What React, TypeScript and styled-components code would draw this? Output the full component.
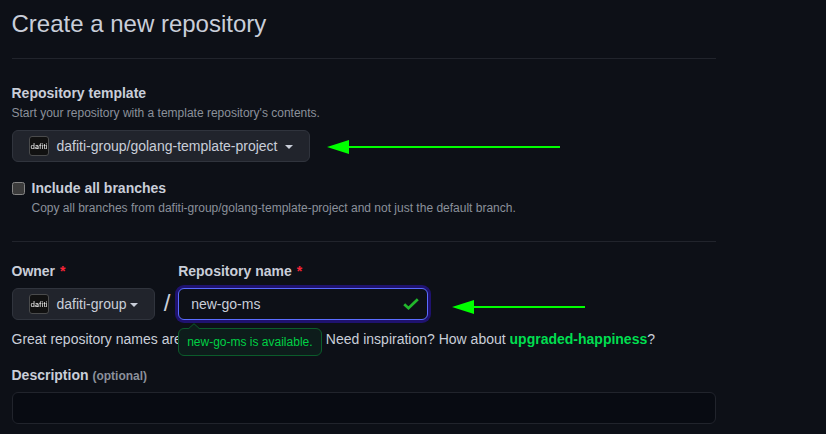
import React from "react";
import styled, { createGlobalStyle } from "styled-components";

const GlobalStyle = createGlobalStyle`
  *, *::before, *::after { box-sizing: border-box; }
  body {
    margin: 0;
    background: #0d1017;
    color: #c9ced9;
    font: 14px/21px "Liberation Sans", Arial, sans-serif;
  }
`;

const Page = styled.main`
  position: relative;
  height: 434px;
  padding: 6px 0 0 11.5px;
  overflow: hidden;
`;

const Form = styled.form`
  width: 704.33px;
`;

const Title = styled.h1`
  margin: 0;
  height: 52px;
  font-size: 24px;
  font-weight: 400;
  line-height: 36px;
`;

const Divider = styled.hr`
  margin: 0;
  height: 1px;
  border: 0;
  background: #21242c;
`;

const TemplateSection = styled.section`
  display: flex;
  flex-direction: column;
  align-items: flex-start;
  height: 182px;
  padding-top: 24px;
`;

const Label = styled.label`
  display: block;
  font-weight: 600;
`;

const Required = styled.span`
  margin-left: 5px;
  color: #f82538;
`;

const Optional = styled.span`
  font-size: 12px;
  color: #8b909b;
`;

const Note = styled.p`
  margin: 0;
  font-size: 12px;
  line-height: 18px;
  color: #8b909b;
`;

const SelectButton = styled.button<{ $gap: number; $top?: number }>`
  display: flex;
  align-items: center;
  height: 32px;
  margin: ${(p) => p.$top ?? 0}px 0 0;
  padding: 0 16px;
  border: 1px solid #30343d;
  border-radius: 6px;
  background: #21242c;
  color: #c9ced9;
  font: inherit;
  white-space: nowrap;

  &::after {
    content: "";
    margin-left: ${(p) => p.$gap}px;
    margin-top: 1px;
    border: 4px solid transparent;
    border-top-color: currentColor;
    border-bottom: 0;
  }
`;

const AvatarSvg = styled.svg`
  flex: none;
  width: 20px;
  height: 20px;
  margin-right: 8px;
  will-change: transform;
`;

const CheckRow = styled.div`
  display: flex;
  align-items: flex-start;
  gap: 7px;
  margin-top: 16px;
`;

const Checkbox = styled.input`
  appearance: none;
  flex: none;
  width: 13px;
  height: 13px;
  margin: 4px 0 0;
  border: 1px solid #858585;
  border-radius: 2.5px;
  background: #3b3b3b;
`;

const NameSection = styled.section`
  padding-top: 19px;
`;

const NameRow = styled.div`
  display: flex;
  align-items: flex-end;
  height: 59px;
`;

const Field = styled.div`
  display: flex;
  flex-direction: column;
  align-items: flex-start;
  height: 59px;
`;

const Control = styled.div`
  position: relative;
  margin-top: 6px;
`;

const Slash = styled.span`
  width: 23.33px;
  padding-left: 8.8px;
  font-size: 24px;
  line-height: 35px;
`;

const NameInput = styled.input`
  display: block;
  width: 250px;
  height: 32px;
  padding: 5px 12px;
  border: 1px solid #5a6cff;
  border-radius: 6px;
  outline: 0;
  background: #0d1017;
  box-shadow: 0 0 0 3px #1f126f;
  color: #c9ced9;
  font: inherit;
`;

const CheckIcon = styled.svg`
  position: absolute;
  right: 9px;
  top: 8px;
  width: 16px;
  height: 16px;
`;

const Availability = styled.div`
  position: absolute;
  z-index: 1;
  top: 40px;
  left: 0;
  width: 144px;
  height: 28px;
  padding: 0 8px;
  border: 1px solid #0b5c2b;
  border-radius: 6px;
  background: #0d1c1b;
  color: #00d045;
  font-size: 12px;
  line-height: 27px;
  white-space: nowrap;
`;

const Pointer = styled.svg`
  position: absolute;
  left: 9px;
  top: -6px;
  width: 12px;
  height: 7px;
`;

const Hint = styled.p`
  margin: 9px 0 15px;
  white-space: nowrap;
`;

const Suggestion = styled.strong`
  color: #00df50;
`;

const DescriptionInput = styled.input`
  display: block;
  width: 100%;
  height: 32px;
  margin-top: 5px;
  padding: 5px 12px;
  border: 1px solid #21242c;
  border-radius: 6px;
  background: #080b12;
  color: #c9ced9;
  font: inherit;
`;

const ArrowSvg = styled.svg<{ $x: number; $y: number }>`
  position: absolute;
  left: ${(p) => p.$x}px;
  top: ${(p) => p.$y}px;
`;

function Avatar() {
  return (
    <AvatarSvg viewBox="0 0 20 20">
      <rect x="0.5" y="0.5" width="19" height="19" rx="2.5" fill="#111111" stroke="#4a4b4c" />
      <text
        x="10"
        y="12.6"
        textAnchor="middle"
        textLength="17"
        lengthAdjust="spacingAndGlyphs"
        fill="#ffffff"
        fontSize="7"
        fontFamily="Inter"
      >
        dafiti
      </text>
    </AvatarSvg>
  );
}

function Arrow({ x, y, length }: { x: number; y: number; length: number }) {
  return (
    <ArrowSvg $x={x} $y={y} width={length} height={14}>
      <path d={`M0 7 22 0V6H${length}V8H22V14Z`} fill="#00ff00" />
    </ArrowSvg>
  );
}

export default function App() {
  return (
    <Page>
      <GlobalStyle />
      <Form>
        <Title>Create a new repository</Title>
        <Divider />
        <TemplateSection>
          <Label>Repository template</Label>
          <Note>Start your repository with a template repository's contents.</Note>
          <SelectButton type="button" $gap={7} $top={8}>
            <Avatar />
            dafiti-group/golang-template-project
          </SelectButton>
          <CheckRow>
            <Checkbox type="checkbox" id="branches" />
            <div>
              <Label htmlFor="branches">Include all branches</Label>
              <Note>
                Copy all branches from dafiti-group/golang-template-project and not just the
                default branch.
              </Note>
            </div>
          </CheckRow>
        </TemplateSection>
        <Divider />
        <NameSection>
          <NameRow>
            <Field>
              <Label>
                Owner<Required>*</Required>
              </Label>
              <SelectButton type="button" $gap={3.3} $top={6}>
                <Avatar />
                dafiti-group
              </SelectButton>
            </Field>
            <Slash>/</Slash>
            <Field>
              <Label htmlFor="name">
                Repository name<Required>*</Required>
              </Label>
              <Control>
                <NameInput id="name" defaultValue="new-go-ms" />
                <CheckIcon viewBox="0 0 16 16">
                  <path d="M1.2 8.2 5.5 12.2 14.8 3.3" fill="none" stroke="#22b82c" strokeWidth="2.8" />
                </CheckIcon>
                <Availability>
                  <Pointer viewBox="0 0 12 7">
                    <path d="M0.5 6 6 0.7 11.5 6V7H0.5Z" fill="#0d1c1b" />
                    <path d="M0.5 5.7 6 0.7 11.5 5.7" fill="none" stroke="#0b5c2b" />
                  </Pointer>
                  new-go-ms is available.
                </Availability>
              </Control>
            </Field>
          </NameRow>
          <Hint>
            Great repository names are short and memorable. Need inspiration? How about{" "}
            <Suggestion>upgraded-happiness</Suggestion>?
          </Hint>
          <Label htmlFor="description">
            Description <Optional>(optional)</Optional>
          </Label>
          <DescriptionInput id="description" />
        </NameSection>
      </Form>
      <Arrow x={327} y={140} length={233} />
      <Arrow x={452} y={300} length={133} />
    </Page>
  );
}
